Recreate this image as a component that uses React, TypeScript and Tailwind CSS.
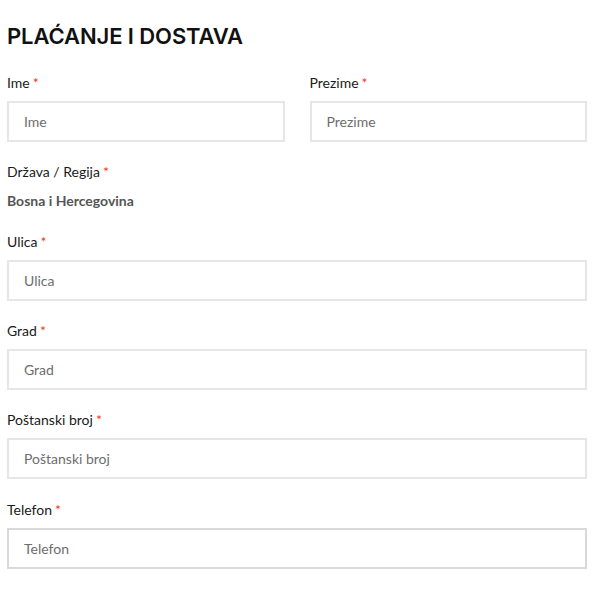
import React from "react";

const Label = ({ text }: { text: string }) => (
  <label className="block h-5 leading-5 text-[14px] text-[#1a1a1a] mb-2">
    {text}
    <span className="text-[#e2401c] ml-[3px]">*</span>
  </label>
);

const Input = ({ ph, dark }: { ph: string; dark?: boolean }) => (
  <input
    placeholder={ph}
    className={`block w-full h-[41px] border-2 ${dark ? "border-[#d9d9d9]" : "border-[#e6e6e6]"} bg-white px-[15px] text-[14px] text-[#333] placeholder:text-[#6d6d6d] outline-none`}
    style={{ fontFamily: "Lato, sans-serif" }}
  />
);

export default function App() {
  return (
    <div className="bg-white w-[597px] min-h-[590px] pl-[7px] pr-[10px] pt-[24px]" style={{ fontFamily: "Lato, sans-serif" }}>
      <h2
        className="text-[22px] leading-6 font-semibold text-[#111] tracking-[-0.1px]"
        style={{ fontFamily: "Inter, sans-serif" }}
      >
        PLAĆANJE I DOSTAVA
      </h2>
      <div className="grid grid-cols-2 gap-x-[25px] mt-[25px]">
        <div>
          <Label text="Ime" />
          <Input ph="Ime" />
        </div>
        <div>
          <Label text="Prezime" />
          <Input ph="Prezime" />
        </div>
      </div>
      <div className="mt-[20px]">
        <Label text="Država / Regija" />
        <div className="h-5 leading-5 text-[14px] font-bold text-[#555] mt-[9px]">Bosna i Hercegovina</div>
      </div>
      <div className="mt-[21px]">
        <Label text="Ulica" />
        <Input ph="Ulica" />
      </div>
      <div className="mt-[20px]">
        <Label text="Grad" />
        <Input ph="Grad" />
      </div>
      <div className="mt-[20px]">
        <Label text="Poštanski broj" />
        <Input ph="Poštanski broj" />
      </div>
      <div className="mt-[21px]">
        <Label text="Telefon" />
        <Input ph="Telefon" dark />
      </div>
    </div>
  );
}
